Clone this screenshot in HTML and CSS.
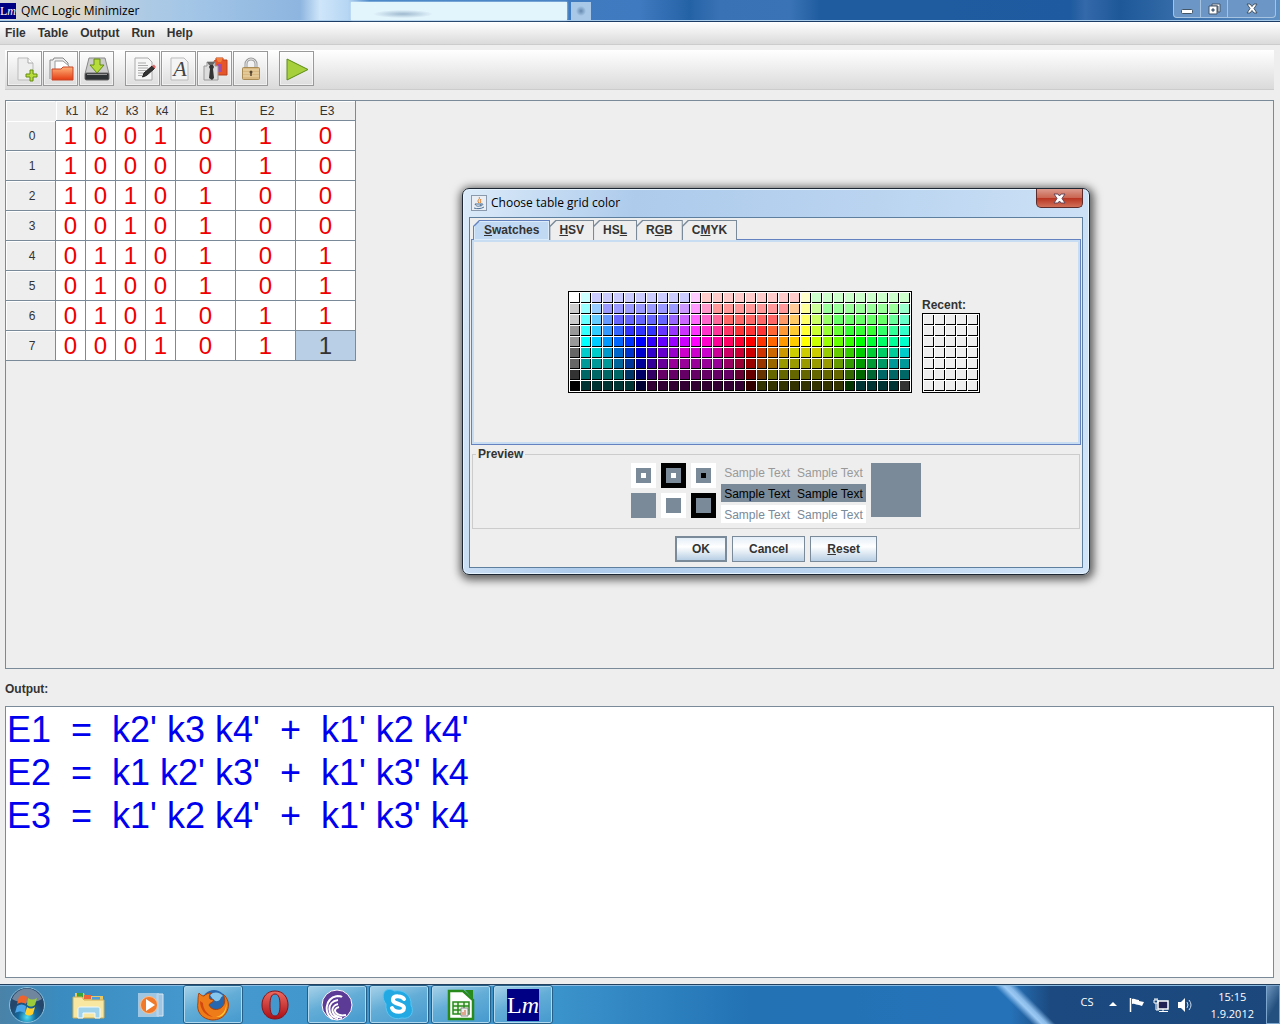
FILE: index.html
```
<!DOCTYPE html>
<html lang="en">
<head>
  <meta charset="UTF-8">
  <meta name="viewport" content="width=device-width, initial-scale=1.0">
  <title>QMC Logic Minimizer</title>
  <link rel="stylesheet" href="styles.css">
</head>
<body>
  <header class="titlebar">
    <span class="lm-logo lm-small">L<i>m</i></span>
    <h1>QMC Logic Minimizer</h1>
    <div class="glass-tab"></div>
    <div class="glass-newtab"></div>
    <div class="window-buttons">
      <button type="button" aria-label="Minimize"><svg width="12" height="12"><rect x=".5" y="6.500" width="11" height="4" rx="1" fill="#fff" stroke="#456"/></svg></button>
      <button type="button" aria-label="Restore"><svg width="13" height="12"><path d="M4 1h8v8h-2V3H4z" fill="#fff" stroke="#456"/><path d="M1 3h8v8H1zM4 6v2h2V6z" fill="#fff" fill-rule="evenodd" stroke="#456"/></svg></button>
      <button type="button" class="wide" aria-label="Close"><svg width="12" height="11"><path d="M1 1h3l2 2.500L8 1h3L8 5.500l3 4.500H8L6 7.500 4 10H1l3-4.500z" fill="#fff" stroke="#456"/></svg></button>
    </div>
  </header>

  <nav class="menubar">
    <button type="button">File</button>
    <button type="button">Table</button>
    <button type="button">Output</button>
    <button type="button">Run</button>
    <button type="button">Help</button>
  </nav>

  <div class="toolbar">
    <div class="tool-group">
      <button type="button" aria-label="New"><svg width="26" height="26" viewBox="0 0 26 26"><path d="M6 2h10l5 5v17H6z" fill="#eee" stroke="#bbb"/><path d="M16 2v5h5" fill="#fff" stroke="#aaa"/><path d="M18 14h3v4h4v3h-4v4h-3v-4h-4v-3h4z" fill="#b8dc3c" stroke="#678c12"/></svg></button>
      <button type="button" aria-label="Open"><svg width="26" height="26" viewBox="0 0 26 26"><path d="M2 23V4h3l1-2h9l5 5v8" fill="#eee" stroke="#888"/><path d="M7 16V5h8l6 5v6" fill="#fff" stroke="#999"/><path d="M4 13h9l2-2h10v13H4z" fill="url(#fold)" stroke="#c7472b"/><defs><linearGradient id="fold" x2="0" y2="1"><stop stop-color="#ffb27a"/><stop offset="1" stop-color="#e43b11"/></linearGradient></defs></svg></button>
      <button type="button" aria-label="Save"><svg width="26" height="26" viewBox="0 0 26 26"><path d="M5 2h16l4 16H1z" fill="#ccc" stroke="#888"/><rect x="1" y="17" width="24" height="7" rx="1.500" fill="#2e3133" stroke="#666"/><path d="M3 18.500h20" stroke="#999"/><path d="M10 3h6v6h4l-7 8-7-8h4z" fill="#b5dc3a" stroke="#648a14"/></svg></button>
    </div>
    <div class="tool-group">
      <button type="button" aria-label="Edit"><svg width="26" height="26" viewBox="0 0 26 26"><path d="M5 2h13l4 4v18H5z" fill="#f7f7f7" stroke="#aaa"/><path d="M8 7h8M8 9.500h10M8 12h10M8 14.500h8M8 17h6M8 19.500h4" stroke="#aaa"/><path d="M22 10l2.500 2.500-8 7-4 1.500 1.500-4z" fill="#333" stroke="#222"/><path d="M22 10l2-1.500 2 2.500-1.500 1.500z" fill="#d66"/></svg></button>
      <button type="button" aria-label="Font"><svg width="26" height="26" viewBox="0 0 26 26"><path d="M5 2h13l4 4v18H5z" fill="#f4f4f4" stroke="#bbb"/><text x="14" y="20" class="font-glyph" text-anchor="middle">A</text></svg></button>
      <button type="button" aria-label="Colors"><svg width="26" height="26" viewBox="0 0 26 26"><path d="M12 5l2-1V2h7v2h4v15H12z" fill="#e6542a" stroke="#b6401d"/><path d="M15 8h5v8h-5z" fill="#a54aa6"/><path d="M14 2h7l-2 4h-3z" fill="#f3803d"/><path d="M2 10h3V6h8v4h3v14H2z" fill="#ddd" stroke="#999"/><path d="M8 9h3l1 2-1 2 1 9-2 2-3-2 1-9-1-2z" fill="#333"/><path d="M5 6h8l-2 3H7z" fill="#666"/></svg></button>
      <button type="button" aria-label="Lock"><svg width="26" height="26" viewBox="0 0 26 26"><path d="M8 12V8a5 5 0 0 1 10 0v4" fill="none" stroke="#999" stroke-width="3"/><path d="M8 12V8a5 5 0 0 1 10 0v4" fill="none" stroke="#eee"/><rect x="4.500" y="11.500" width="17" height="12" rx="1" fill="#d9b981" stroke="#a98b56"/><path d="M5 14h16M5 17h16M5 20h16" stroke="#efd9ae"/><circle cx="13" cy="16" r="1.500" fill="#543"/><path d="M13 16v4" stroke="#543" stroke-width="1.500"/></svg></button>
    </div>
    <div class="tool-group">
      <button type="button" aria-label="Run"><svg width="26" height="26" viewBox="0 0 26 26"><path d="M3 3l21 10.500L3 24z" fill="#a6d03c" stroke="#5c8a1a"/></svg></button>
    </div>
  </div>

  <main>
    <section class="table-pane">
      <table class="truth">
        <thead>
          <tr><th class="idx"></th><th>k1</th><th>k2</th><th>k3</th><th>k4</th><th class="fn">E1</th><th class="fn">E2</th><th class="fn">E3</th></tr>
        </thead>
        <tbody>
          <tr><th>0</th><td>1</td><td>0</td><td>0</td><td>1</td><td>0</td><td>1</td><td>0</td></tr>
          <tr><th>1</th><td>1</td><td>0</td><td>0</td><td>0</td><td>0</td><td>1</td><td>0</td></tr>
          <tr><th>2</th><td>1</td><td>0</td><td>1</td><td>0</td><td>1</td><td>0</td><td>0</td></tr>
          <tr><th>3</th><td>0</td><td>0</td><td>1</td><td>0</td><td>1</td><td>0</td><td>0</td></tr>
          <tr><th>4</th><td>0</td><td>1</td><td>1</td><td>0</td><td>1</td><td>0</td><td>1</td></tr>
          <tr><th>5</th><td>0</td><td>1</td><td>0</td><td>0</td><td>1</td><td>0</td><td>1</td></tr>
          <tr><th>6</th><td>0</td><td>1</td><td>0</td><td>1</td><td>0</td><td>1</td><td>1</td></tr>
          <tr><th>7</th><td>0</td><td>0</td><td>0</td><td>1</td><td>0</td><td>1</td><td class="selected">1</td></tr>
        </tbody>
      </table>
    </section>
    <label class="output-label" for="output">Output:</label>
    <textarea id="output" class="output" readonly spellcheck="false">E1  =  k2' k3 k4'  +  k1' k2 k4'
E2  =  k1 k2' k3'  +  k1' k3' k4
E3  =  k1' k2 k4'  +  k1' k3' k4</textarea>
  </main>

  <div class="dialog" role="dialog" aria-labelledby="dialog-title">
    <div class="dialog-title">
      <svg width="16" height="16" viewBox="0 0 16 16"><rect x=".5" y=".5" width="15" height="15" fill="#e8eef4" stroke="#8a9aac"/><path d="M8 2c2 2-3 3 0 6M10 4c-2 2 1 2-1 4" fill="none" stroke="#e07820"/><path d="M4 9h6c0 3-5 3-6 0zM10 9c3-1 2 2-1 2M3 13c3 1 7 1 10-1" fill="none" stroke="#4d6f94"/></svg>
      <h2 id="dialog-title">Choose table grid color</h2>
      <button type="button" class="dialog-close" aria-label="Close"><svg width="13" height="11"><path d="M1 1h4l1.500 2L8 1h4L9 5.500l3 4.500H8L6.500 8 5 10H1l3-4.500z" fill="#fff" stroke="#645"/></svg></button>
    </div>
    <div class="dialog-body">
      <div class="tabs">
        <button type="button" class="tab active"><span><u>S</u>watches</span></button>
        <button type="button" class="tab"><span><u>H</u>SV</span></button>
        <button type="button" class="tab"><span>HS<u>L</u></span></button>
        <button type="button" class="tab"><span>R<u>G</u>B</span></button>
        <button type="button" class="tab"><span>C<u>M</u>YK</span></button>
      </div>
      <div class="tab-pane">
        <div class="swatches" id="swatches"></div>
        <div class="recent">
          <span>Recent:</span>
          <div class="swatches" id="recent"></div>
        </div>
      </div>
      <fieldset class="preview">
        <legend>Preview</legend>
        <div class="squares">
          <svg width="25" height="25"><path d="M0 0h25v25H0z" fill="#fff"/><path d="M5 5h15v15H5z" fill="#7a8a99"/><path d="M10 10h5v5h-5z" fill="#fff"/></svg>
          <svg width="25" height="25"><path d="M0 0h25v25H0z"/><path d="M5 5h15v15H5z" fill="#7a8a99"/><path d="M10 10h5v5h-5z" fill="#fff"/></svg>
          <svg width="25" height="25"><path d="M0 0h25v25H0z" fill="#fff"/><path d="M5 5h15v15H5z" fill="#7a8a99"/><path d="M10 10h5v5h-5z"/></svg>
          <svg width="25" height="25"><path d="M0 0h25v25H0z" fill="#7a8a99"/></svg>
          <svg width="25" height="25"><path d="M0 0h25v25H0z" fill="#fff"/><path d="M5 5h15v15H5z" fill="#7a8a99"/></svg>
          <svg width="25" height="25"><path d="M0 0h25v25H0z"/><path d="M5 5h15v15H5z" fill="#7a8a99"/></svg>
        </div>
        <div class="samples">
          <p><span>Sample Text</span><span>Sample Text</span></p>
          <p class="on-color"><span>Sample Text</span><span>Sample Text</span></p>
          <p class="on-white"><span>Sample Text</span><span>Sample Text</span></p>
        </div>
        <div class="current-color"></div>
      </fieldset>
      <div class="dialog-actions">
        <button type="button" class="default">OK</button>
        <button type="button">Cancel</button>
        <button type="button"><u>R</u>eset</button>
      </div>
    </div>
  </div>

  <footer class="taskbar">
    <button type="button" class="start" aria-label="Start">
      <svg width="38" height="38" viewBox="0 0 38 38"><defs><radialGradient id="orb" cy=".85"><stop stop-color="#4fe0f5"/><stop offset=".5" stop-color="#14699c"/><stop offset="1" stop-color="#24466b"/></radialGradient></defs><circle cx="19" cy="19" r="17.500" fill="url(#orb)" stroke="#8ac0dc"/><path d="M4 13a16 16 0 0 1 30 0c-9 5-21 5-30 0z" fill="#fff" opacity=".35"/><path d="M11 11c3-2 5-2 8 0l-1 7c-3-2-6-2-9 0z" fill="#f0642c"/><path d="M20 12c3 2 6 2 9 0l-2 7c-3 2-5 2-8 0z" fill="#9bcb3a"/><path d="M9 20c3-2 6-2 9 0l-1 7c-3-2-6-2-10 0z" fill="#4aa5ea"/><path d="M19 21c3 2 5 2 8 0l-2 7c-3 2-5 2-8 0z" fill="#ffd02e"/></svg>
    </button>
    <div class="tasks">
      <button type="button" aria-label="Explorer"><svg width="34" height="32" viewBox="0 0 34 32"><path d="M3 27V4h9l1 3h18v22z" fill="#e8c765"/><path d="M5 4h6v4H5z" fill="#37a53a"/><path d="M12 6h7v4h-7z" fill="#eb6538"/><path d="M20 8h8v4h-8z" fill="#4c9de0"/><path d="M1 8h9l2 3h20v18H1z" fill="#f8e7a0" stroke="#cfae55"/><path d="M6 29V20c0-1 1-2 2-2h18c1 0 2 1 2 2v9h-5v-5H11v5z" fill="#9fd3ec" stroke="#f2fbff"/></svg></button>
      <button type="button" aria-label="Media Player"><svg width="28" height="26" viewBox="0 0 28 26"><path d="M20 2h6v22h-6z" fill="#9fc6e2" stroke="#d7e9f5"/><path d="M1 1h21v24H1z" fill="#b7d3e8" opacity=".8"/><circle cx="12" cy="13" r="8.500" fill="#f0792a" stroke="#fbc08f"/><path d="M9 7l9 6-9 6z" fill="#fff"/></svg></button>
      <button type="button" class="open" aria-label="Firefox"><svg width="34" height="34" viewBox="0 0 34 34"><circle cx="18" cy="14" r="12" fill="#2767ad"/><path d="M14 7c4-4 10-3 13 1-3 1-2 4-5 5-4 1-6-3-8-6z" fill="#86c5ec"/><path d="M3 5c2 2 3 3 5 3 2-2 4-3 7-3-2 2-2 4-1 6l4 1c-1 3-4 2-5 5 2 5 9 6 13 2 4-4 3-9 1-13 5 4 7 11 4 17-3 7-9 9-15 9C6 31 0 24 2 14c0-3 0-6 1-9z" fill="#ee7c18" stroke="#a8420f"/><path d="M29 10c3 8 0 17-9 19 8 1 13-7 9-19z" fill="#ffcb36"/><path d="M4 13c0 8 5 15 13 16-6-3-10-8-10-14z" fill="#d2480f"/></svg></button>
      <button type="button" aria-label="Opera"><svg width="30" height="32" viewBox="0 0 30 32"><defs><linearGradient id="op" x2="0" y2="1"><stop stop-color="#ee6c62"/><stop offset="1" stop-color="#a90f16"/></linearGradient></defs><path fill-rule="evenodd" d="M15 2c8 0 13 6 13 14s-5 14-13 14S2 24 2 16 7 2 15 2zm0 3c-4 0-5 5-5 11s1 11 5 11 5-5 5-11-1-11-5-11z" fill="url(#op)" stroke="#8a1216"/></svg></button>
      <button type="button" class="open" aria-label="BitTorrent"><svg width="32" height="32" viewBox="0 0 32 32"><circle cx="16" cy="16" r="15" fill="#5c3b97" stroke="#fff"/><path d="M12 30C3 25 3 10 16 7M17 30C6 27 5 13 17 11M21 29C9 27 9 17 17 15M25 26c-10 2-15-6-7-8M16 7c2 0 4 0 5 1" fill="none" stroke="#fff" stroke-width="2"/></svg></button>
      <button type="button" class="open" aria-label="Skype"><svg width="34" height="32" viewBox="0 0 34 32"><path d="M3 2c4-3 8-1 9 0 10-2 18 5 17 14 4 7-1 15-9 13C10 32 3 25 4 15 1 11 0 6 3 2z" fill="#22a9e4" stroke="#5cc4f0"/><path d="M22 10c-2-3-10-4-11 0-1 6 11 4 11 9 0 5-10 5-12 0" fill="none" stroke="#fff" stroke-width="4" stroke-linecap="round"/></svg></button>
      <button type="button" class="open" aria-label="Calc"><svg width="28" height="32" viewBox="0 0 28 32"><path d="M2 2h14l10 9v19H2z" fill="#fff" stroke="#278a1b" stroke-width="2.500"/><path d="M18 1h8v9z" fill="#278a1b"/><path d="M6 13h16v12H6zM6 17h16M6 21h16M11 13v12M17 13v12" fill="#e5f5de" stroke="#278a1b" stroke-width="1.500"/><path d="M14 19h7v8h-7z" fill="#eee" stroke="#888"/><path d="M16 26v-3M18 26v-5" stroke="#d26030"/></svg></button>
      <button type="button" class="open" aria-label="QMC Logic Minimizer"><span class="lm-logo">L<i>m</i></span></button>
    </div>
    <div class="tray">
      <span class="lang">CS</span>
      <svg width="8" height="5"><path d="M0 4l4-4 4 4z" fill="#fff"/></svg>
      <svg width="16" height="16"><path d="M1.500 1v14" stroke="#fff" stroke-width="1.500"/><path d="M3 2c3-1 4 1 7 1v5c-3 0-4-2-7-1zM10 4l5 1-2 4-3-1z" fill="#fff"/></svg>
      <svg width="16" height="16"><path d="M5 4h10v8H5z" fill="#225" stroke="#fff" stroke-width="1.500"/><path d="M10 12v2M6 14.500h9M1 3h4v3H1zM2 1v2M4 1v2M3 6v7h3" fill="none" stroke="#fff"/></svg>
      <svg width="16" height="16"><path d="M1 5h3l4-4v14l-4-4H1z" fill="#fff"/><path d="M10 5q2 3 0 6M12 3q4 5 0 10" fill="none" stroke="#cde"/></svg>
      <div class="clock"><span>15:15</span><span>1.9.2012</span></div>
    </div>
    <button type="button" class="show-desktop" aria-label="Show desktop"></button>
  </footer>

  <script>
    // palette rows, "hex*count" repeats a color
    var rows = [
      "fff cff ccf*9 fcf fcc*9 ffc cfc*9",
      "ccc 9ff 9cf 99f*7 c9f f9f f9c f99*7 fc9 ff9 cf9 9f9*7 9fc",
      "ccc 6ff 6cf 69f 66f*5 96f c6f f6f f6c f69 f66*5 f96 fc6 ff6 cf6 9f6 6f6*5 6f9 6fc",
      "999 3ff 3cf 39f 36f 33f*3 63f 93f c3f f3f f3c f39 f36 f33*3 f63 f93 fc3 ff3 cf3 9f3 6f3 3f3*3 3f6 3f9 3fc",
      "999 0ff 0cf 09f 06f 03f 00f 30f 60f 90f c0f f0f f0c f09 f06 f03 f00 f30 f60 f90 fc0 ff0 cf0 9f0 6f0 3f0 0f0 0f3 0f6 0f9 0fc",
      "666 0cc*2 09c 06c 03c 00c 30c 60c 90c c0c*3 c09 c06 c03 c00 c30 c60 c90 cc0*3 9c0 6c0 3c0 0c0 0c3 0c6 0c9 0cc",
      "666 099*3 069 039 009 309 609 909*5 906 903 900 930 960 990*5 690 390 090 093 096 099*2",
      "333 066*4 036 006 306 606*7 603 600 630 660*7 360 060 063 066*3",
      "000 033*5 003 303*9 300 330*8 030 033*4 333"
    ];

    function addSwatch(parent, color) {
      var cell = document.createElement("button");
      cell.type = "button";
      cell.setAttribute("aria-label", color);
      cell.style.backgroundColor = color;
      parent.appendChild(cell);
    }

    var palette = document.getElementById("swatches");
    rows.forEach(function(row) {
      row.split(" ").forEach(function(item) {
        var parts = item.split("*");
        for (var i = 0; i < (parts[1] || 1); i++) addSwatch(palette, "#" + parts[0]);
      });
    });

    var recent = document.getElementById("recent");
    for (var i = 0; i < 35; i++) addSwatch(recent, "#eee");
  </script>
</body>
</html>
```
FILE: styles.css
```
* { box-sizing: border-box; }
body {
  margin: 0;
  height: 100vh;
  display: flex;
  flex-direction: column;
  position: relative;
  overflow: hidden;
  background: #eee;
  color: #333;
  font: bold 12px/16px "Liberation Sans", Arial, sans-serif;
}
button {
  font: inherit;
  color: inherit;
  background: none;
  border: 0;
  padding: 0;
  margin: 0;
}
svg { display: block; }
h1, h2, p { margin: 0; }

/* window title */
.titlebar {
  display: flex;
  align-items: center;
  height: 22px;
  flex: none;
  border-bottom: 1px solid #1d3d66;
  box-shadow: inset 0 -1px #a9cbea;
  background: linear-gradient(90deg, #d8d8d8 0, #ddd5c8 90px, #b7cee2 105px, #a3c6e7 190px, #8db5df 300px, #cfe6fa 320px, #b6d6f3 348px, #4280c4 370px, #3f79bf 640px, #2462a6 690px, #3a73b5 720px, #3a74b6 790px, #1f5c9f 820px, #1d5a9f 1070px, #3469aa 1085px, #1e5899 1120px, #5f90c4 1280px);
}
.titlebar h1 {
  font: 12px/20px "Open Sans", "Noto Sans", sans-serif;
  color: #000;
  flex: 0 0 330px;
}
.lm-logo {
  display: grid;
  place-content: center;
  grid-auto-flow: column;
  width: 32px;
  height: 32px;
  background: #000084;
  color: #fff;
  font: 24px/30px "Liberation Serif", serif;
}
.lm-small { width: 16px; height: 16px; margin-right: 5px; font-size: 12px; line-height: 14px; }
.glass-tab {
  width: 216px;
  height: 18px;
  background: radial-gradient(ellipse 30px 4px at 52px 12px, #9fb9cf, transparent) #e2f4fc;
  box-shadow: 0 0 2px #e2f4fc;
}
.glass-newtab { width: 20px; height: 18px; margin-left: 4px; background: radial-gradient(circle at center, #6488ad, #a9c8e8 5px); }
.window-buttons {
  display: flex;
  align-self: flex-start;
  margin-left: auto;
  margin-right: 4px;
  border: 1px solid #a6c4e2;
  border-top: 0;
  border-radius: 0 0 4px 4px;
  background: #6b96c6;
}
.window-buttons button {
  width: 27px;
  height: 17px;
  display: grid;
  place-items: center;
  border-right: 1px solid #a6c4e2;
}
.window-buttons .wide { width: 47px; border-right: 0; }

.menubar {
  display: flex;
  gap: 12px;
  height: 23px;
  flex: none;
  padding: 0 5px;
  border-bottom: 1px solid #ccc;
  background: linear-gradient(#fff, #dadada);
}
.toolbar {
  display: flex;
  gap: 11px;
  height: 40px;
  flex: none;
  margin: 5px 6px 0 5px;
  padding: 1px 2px;
  border-bottom: 1px solid #ccc;
  background: linear-gradient(#fff, #dadada);
}
.tool-group { display: flex; gap: 1px; }
.toolbar button {
  width: 35px;
  height: 35px;
  display: grid;
  place-items: center;
  border: 1px solid #999;
  box-shadow: inset 0 0 0 1px #fff8;
}
.font-glyph { font: italic 22px "Liberation Serif", serif; fill: #444; }

main {
  flex: 1;
  min-height: 0;
  display: flex;
  flex-direction: column;
  padding: 10px 6px 6px 5px;
}
.table-pane { flex: 570 0 0; border: 1px solid #7a8a99; }
.output-label { padding: 12px 0 9px; }
.output {
  flex: 271 0 0;
  min-height: 0;
  width: 100%;
  padding: 1px 1px 0;
  border: 1px solid #7a8a99;
  border-radius: 0;
  outline: 0;
  resize: none;
  background: #fff;
  color: #00e;
  font: 36px/43px "Liberation Sans", Arial, sans-serif;
}

/* truth table */
.truth {
  table-layout: fixed;
  width: 350px;
  border-collapse: separate;
  border-spacing: 0;
}
.truth th, .truth td {
  padding: 0;
  width: 30px;
  border: solid #7a8a99;
  border-width: 0 1px 1px 0;
  text-align: center;
  font-weight: normal;
}
.truth th { padding-left: 3px; box-shadow: inset 1px 1px #fff; }
.truth thead th { height: 20px; padding-top: 2px; font-size: 12px; line-height: 17px; }
.truth .idx { width: 50px; border-color: #eee; }
.truth .fn { width: 60px; }
.truth tbody th, .truth td { height: 30px; }
.truth td { background: #fff; color: #f00000; font-size: 24px; line-height: 29px; }
.truth .selected { background: #b8cfe5; color: #333; }

/* color chooser */
.dialog {
  position: absolute;
  left: 462px;
  top: 188px;
  width: 628px;
  padding: 0 6px 6px;
  border: 1px solid #1c2733;
  border-radius: 7px;
  background: linear-gradient(100deg, #dcebf9, #aecbec 25%, #bad4f0 60%, #d2e5f8);
  box-shadow: inset 0 0 0 1px #e6f4ff, 1px 2px 9px 3px #0009;
}
.dialog-title { display: flex; align-items: center; height: 28px; padding: 0 0 0 2px; }
.dialog-title h2 { margin-left: 4px; font: 12px/16px "Open Sans", "Noto Sans", sans-serif; color: #000; }
.dialog-close {
  align-self: flex-start;
  display: grid;
  place-items: center;
  width: 47px;
  height: 19px;
  margin-left: auto;
  border: 1px solid #5c2b2b;
  border-top: 0;
  border-radius: 0 0 5px 5px;
  background: linear-gradient(#dc9a8c, #ca6653 48%, #b8331f 50%, #d0705a);
}
.dialog-body { border: 1px solid #5f7f9f; background: #eee; padding: 2px 1px 5px; }
.tabs { display: flex; padding-left: 2px; margin-bottom: -1px; }
.tab {
  position: relative;
  height: 20px;
  padding: 0 10px;
  margin-right: -1px;
  background: #7a8a99;
  clip-path: polygon(0 6px, 6px 0, 100% 0, 100% 100%, 0 100%);
}
.tab::before {
  content: "";
  position: absolute;
  inset: 1px 1px 0;
  background: #eee;
  clip-path: polygon(0 6px, 6px 0, 100% 0, 100% 100%, 0 100%);
}
.tab span { position: relative; }
.tab.active { background: #6382bf; padding: 0 11px; }
.tab.active::before { background: #c1d9f2; box-shadow: inset 0 0 0 1px #dcebfa; }
.tab-pane {
  display: flex;
  justify-content: center;
  align-items: center;
  gap: 10px;
  height: 206px;
  padding-right: 4px;
  border: 1px solid #6382bf;
  box-shadow: inset 0 0 0 2px #c8ddf2;
}
.swatches {
  display: grid;
  grid-template-columns: repeat(31, 10px);
  grid-auto-rows: 10px;
  gap: 1px;
  padding: 1px;
  border: 1px solid #000;
  background: #fff;
}
.swatches button { border: solid #000; border-width: 0 1px 1px 0; }
.recent { align-self: flex-end; margin-bottom: 51px; }
.recent .swatches { grid-template-columns: repeat(5, 10px); }

.preview {
  display: flex;
  justify-content: center;
  gap: 5px;
  height: 83px;
  margin: 1px 1px 0;
  padding: 1px 0 0;
  border: 1px solid #ccc;
}
.preview legend { margin-left: 3px; padding: 0 2px; }
.squares { display: grid; grid-template-columns: repeat(3, 25px); gap: 5px; align-content: start; }
.samples { display: grid; gap: 3px; align-content: start; font-weight: normal; line-height: 15px; color: #999; }
.samples p { display: flex; gap: 7px; padding: 3px 3px 0; }
.samples .on-color { background: #7a8a99; color: #000; }
.samples .on-white { background: #fff; color: #7a8a99; }
.current-color { width: 50px; height: 54px; background: #7a8a99; }

.dialog-actions { display: flex; justify-content: center; gap: 5px; padding-top: 7px; }
.dialog-actions button {
  height: 26px;
  padding: 0 16px;
  border: 1px solid #7a8a99;
  background: linear-gradient(#e4eef8, #fff 40%, #b8cfe5);
}
.dialog-actions .default { border-width: 2px; padding: 0 15px; }

/* taskbar */
.taskbar {
  position: relative;
  display: flex;
  align-items: stretch;
  height: 40px;
  flex: none;
  border-top: 1px solid #24425f;
  box-shadow: inset 0 1px #8bbbe0;
  color: #fff;
  font: 11px/17px "Open Sans", "Noto Sans", sans-serif;
  background: linear-gradient(90deg, #4a82a8, #3a8cc0 60px, #4599ce 200px, #3b93cb 560px, #2272b4 750px, #2672b9 1010px, #1c4a80 1050px, #1b477c);
}
/* light streak of the wallpaper behind the glass */
.taskbar::before {
  content: "";
  position: absolute;
  left: 992px;
  top: 1px;
  bottom: 0;
  width: 68px;
  background: linear-gradient(45deg, #2672b900 38%, #9ccaf5 47%, #8abbe9 52%, #1c4a8000 60%);
}
.start { width: 54px; display: grid; place-items: center; }
.tasks { display: flex; gap: 2px; padding-left: 5px; }
.tasks button { width: 60px; display: grid; place-items: center; }
.tasks .open {
  border: 1px solid #255f87;
  border-radius: 3px;
  box-shadow: inset 0 0 0 1px #b0d9f0;
  background: linear-gradient(160deg, #a8d2e9, #63add7 45%, #4599ce);
}
.tray { display: flex; align-items: center; gap: 8px; margin-left: auto; }
.tray .lang { margin-right: 8px; padding-bottom: 6px; }
.tray .lang + svg { margin-right: 4px; }
.clock { display: flex; flex-direction: column; align-items: center; margin: 0 12px 0 9px; }
.show-desktop { width: 14px; border: 1px solid #7da6cf; background: linear-gradient(120deg, #6c93bb, #24507f 60%); }
```
